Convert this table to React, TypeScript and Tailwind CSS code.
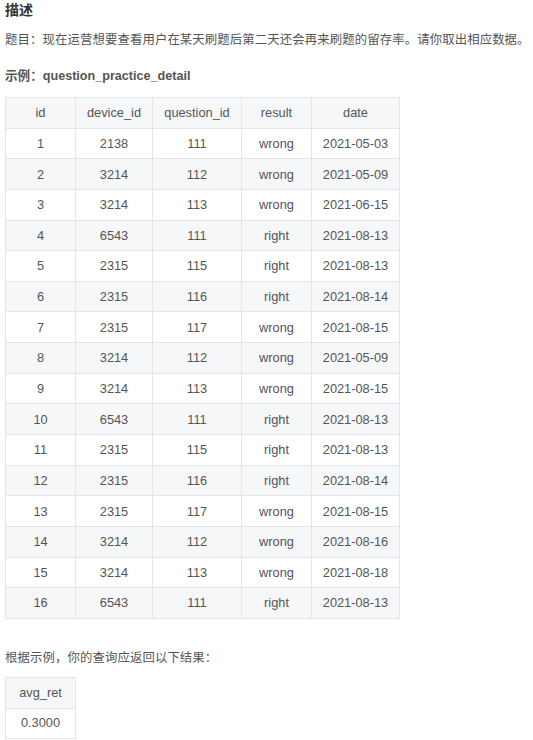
const rows = [
  [1, 2138, 111, 'wrong', '2021-05-03'],
  [2, 3214, 112, 'wrong', '2021-05-09'],
  [3, 3214, 113, 'wrong', '2021-06-15'],
  [4, 6543, 111, 'right', '2021-08-13'],
  [5, 2315, 115, 'right', '2021-08-13'],
  [6, 2315, 116, 'right', '2021-08-14'],
  [7, 2315, 117, 'wrong', '2021-08-15'],
  [8, 3214, 112, 'wrong', '2021-05-09'],
  [9, 3214, 113, 'wrong', '2021-08-15'],
  [10, 6543, 111, 'right', '2021-08-13'],
  [11, 2315, 115, 'right', '2021-08-13'],
  [12, 2315, 116, 'right', '2021-08-14'],
  [13, 2315, 117, 'wrong', '2021-08-15'],
  [14, 3214, 112, 'wrong', '2021-08-16'],
  [15, 3214, 113, 'wrong', '2021-08-18'],
  [16, 6543, 111, 'right', '2021-08-13'],
];

const cols = ['id', 'device_id', 'question_id', 'result', 'date'];
const widths = ['w-[70px]', 'w-[77px]', 'w-[89px]', 'w-[70px]', 'w-[88px]'];

export default function App() {
  return (
    <div className="min-h-[740px] bg-white px-[5px] pt-0 text-[#555] font-['Liberation_Sans','Noto_Sans_CJK_SC',sans-serif]">
      <h3 className="text-[14px] leading-[20px] font-bold text-[#333]">描述</h3>
      <p className="mt-[10px] text-[12.4px] leading-[20px] whitespace-nowrap tracking-[0.1px]">
        题目：现在运营想要查看用户在某天刷题后第二天还会再来刷题的留存率。请你取出相应数据。
      </p>
      <p className="mt-[16px] text-[12.6px] leading-[20px] font-bold">示例：question_practice_detail</p>

      <table className="mt-[11px] border-collapse table-fixed text-[12.8px]">
        <thead>
          <tr className="h-[30.65px] bg-[#f6f7f9]">
            {cols.map((c, i) => (
              <th key={c} className={`${widths[i]} border border-[#e3e5e9] font-normal text-center p-0`}>
                {c}
              </th>
            ))}
          </tr>
        </thead>
        <tbody>
          {rows.map((r, idx) => (
            <tr key={idx} className={`h-[30.65px] ${idx % 2 === 1 ? 'bg-[#f6f7f9]' : 'bg-white'}`}>
              {r.map((v, i) => (
                <td key={i} className="border border-[#e3e5e9] text-center p-0">
                  {v}
                </td>
              ))}
            </tr>
          ))}
        </tbody>
      </table>

      <p className="mt-[29px] text-[12.4px] leading-[20px] tracking-[0.1px]">根据示例，你的查询应返回以下结果：</p>

      <table className="mt-[9px] border-collapse table-fixed text-[12.8px]">
        <thead>
          <tr className="h-[30.65px] bg-[#f6f7f9]">
            <th className="w-[70px] border border-[#e3e5e9] font-normal text-center p-0">avg_ret</th>
          </tr>
        </thead>
        <tbody>
          <tr className="h-[30px] bg-white">
            <td className="border border-[#e3e5e9] text-center p-0">0.3000</td>
          </tr>
        </tbody>
      </table>
    </div>
  );
}
